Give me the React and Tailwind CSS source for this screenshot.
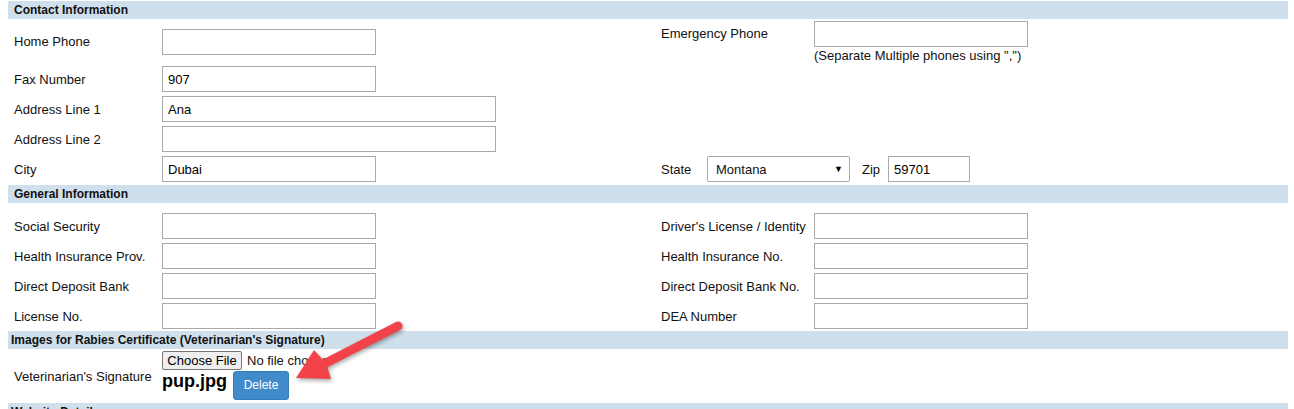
import React from 'react';

const SectionHeader = ({ title, pad = 'pl-[6px]' }) => (
  <div className={`w-[1280px] h-[18px] bg-[#cfdfeb] ${pad} text-[12px] font-bold leading-[18px] text-[#111]`}>
    {title}
  </div>
);

const Field = ({ value = '', w = 'w-[214px]' }) => (
  <input
    readOnly
    value={value}
    className={`${w} h-[26px] border border-[#a9a9a9] bg-white px-[5px] text-[13px] text-black outline-none`}
  />
);

const Label = ({ children }) => <div className="self-center pl-[6px]">{children}</div>;

const Row = ({ left, leftField, right, rightField }) => (
  <div className="grid grid-cols-[154px_499px_153px_1fr] h-[30px]">
    <Label>{left}</Label>
    <div className="self-center">{leftField}</div>
    {right ? <div className="self-center">{right}</div> : <div />}
    <div className="self-center">{rightField}</div>
  </div>
);

const Arrow = () => (
  <svg
    className="absolute left-0 top-0 pointer-events-none drop-shadow-[1px_2px_2px_rgba(0,0,0,0.35)]"
    width="1294"
    height="409"
    viewBox="0 0 1294 409"
  >
    <line x1="398" y1="326" x2="322" y2="365" stroke="#f2434b" strokeWidth="9" strokeLinecap="round" />
    <polygon points="296,378 314,350 326,363 331,379" fill="#f2434b" />
  </svg>
);

export default function App() {
  return (
    <div className="relative w-[1294px] h-[409px] overflow-hidden bg-white pl-[8px] pt-[1px] font-['Liberation_Sans',Arial,sans-serif] text-[13px] leading-[15px] text-[#111]">
      <SectionHeader title="Contact Information" />

      <div className="grid grid-cols-[154px_499px_153px_1fr] h-[45px]">
        <Label>Home Phone</Label>
        <div className="self-center"><Field /></div>
        <div className="pt-[7px]">Emergency Phone</div>
        <div className="pt-[2px]">
          <Field />
          <div className="mt-[1px]">(Separate Multiple phones using ",")</div>
        </div>
      </div>

      <Row left="Fax Number" leftField={<Field value="907" />} />
      <Row left="Address Line 1" leftField={<Field value="Ana" w="w-[334px]" />} />
      <Row left="Address Line 2" leftField={<Field w="w-[334px]" />} />

      <div className="grid grid-cols-[154px_499px_1fr] h-[30px] mb-[1px]">
        <Label>City</Label>
        <div className="self-center"><Field value="Dubai" /></div>
        <div className="self-center flex items-center">
          <span className="w-[46px]">State</span>
          <div className="w-[143px] h-[26px] border border-[#a9a9a9] rounded-[2px] bg-white flex items-center justify-between pl-[8px] pr-[6px]">
            <span>Montana</span>
            <span className="text-[9px] text-black">▼</span>
          </div>
          <span className="ml-[12px] w-[26px]">Zip</span>
          <Field value="59701" w="w-[82px]" />
        </div>
      </div>

      <SectionHeader title="General Information" />

      <div className="pt-[8px]">
        <Row left="Social Security" leftField={<Field />} right="Driver's License / Identity" rightField={<Field />} />
        <Row left="Health Insurance Prov." leftField={<Field />} right="Health Insurance No." rightField={<Field />} />
        <Row left="Direct Deposit Bank" leftField={<Field />} right="Direct Deposit Bank No." rightField={<Field />} />
        <Row left="License No." leftField={<Field />} right="DEA Number" rightField={<Field />} />
      </div>

      <SectionHeader title="Images for Rabies Certificate (Veterinarian's Signature)" pad="pl-[3px]" />

      <div className="grid grid-cols-[154px_1fr] h-[54px]">
        <Label>Veterinarian's Signature</Label>
        <div className="pt-[2px]">
          <div className="flex items-center">
            <button className="h-[19px] w-[80px] border border-[#767676] rounded-[2px] bg-[#efefef] text-[13px] leading-[17px] text-black">
              Choose File
            </button>
            <span className="ml-[5px]">No file chosen</span>
          </div>
          <div className="flex items-start mt-[1px]">
            <span className="text-[18px] leading-[21px] font-bold text-black">pup.jpg</span>
            <button className="ml-[6px] w-[56px] h-[29px] rounded-[3px] border border-[#357ebd] bg-[#428bca] text-[12px] text-white">
              Delete
            </button>
          </div>
        </div>
      </div>

      <SectionHeader title="Website Details" pad="pl-[3px]" />

      <Arrow />
    </div>
  );
}
